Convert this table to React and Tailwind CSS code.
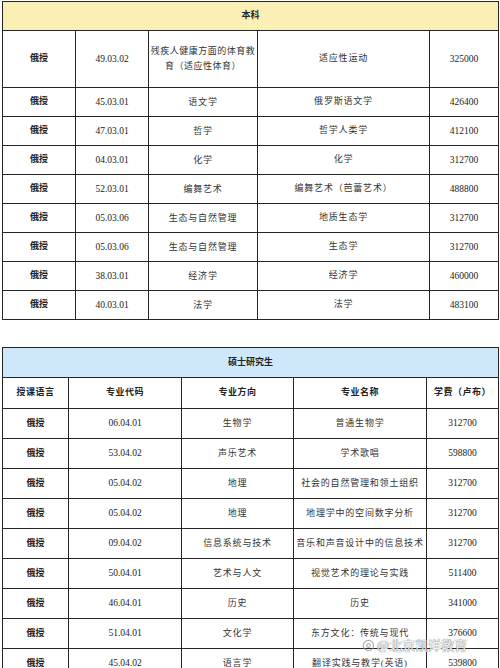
import React from "react";

const BACHELOR = [
  ["49.03.02", "残疾人健康方面的体育教育（适应性体育）", "适应性运动", "325000"],
  ["45.03.01", "语文学", "俄罗斯语文学", "426400"],
  ["47.03.01", "哲学", "哲学人类学", "412100"],
  ["04.03.01", "化学", "化学", "312700"],
  ["52.03.01", "编舞艺术", "编舞艺术（芭蕾艺术）", "488800"],
  ["05.03.06", "生态与自然管理", "地质生态学", "312700"],
  ["05.03.06", "生态与自然管理", "生态学", "312700"],
  ["38.03.01", "经济学", "经济学", "460000"],
  ["40.03.01", "法学", "法学", "483100"],
];

const MASTER = [
  ["06.04.01", "生物学", "普通生物学", "312700"],
  ["53.04.02", "声乐艺术", "学术歌唱", "598800"],
  ["05.04.02", "地理", "社会的自然管理和领土组织", "312700"],
  ["05.04.02", "地理", "地理学中的空间数字分析", "312700"],
  ["09.04.02", "信息系统与技术", "音乐和声音设计中的信息技术", "312700"],
  ["50.04.01", "艺术与人文", "视觉艺术的理论与实践", "511400"],
  ["46.04.01", "历史", "历史", "341000"],
  ["51.04.01", "文化学", "东方文化：传统与现代", "376600"],
  ["45.04.02", "语言学", "翻译实践与教学(英语)", "539800"],
];

const cell = "border border-[#262626] text-center align-middle p-0";
const num = "text-[9.5px] text-[#222]";
const cjk = "text-[9px] tracking-[0.8px] text-[#333]";
const bold = "text-[9px] font-bold text-[#222]";

export default function App() {
  return (
    <div
      className="relative w-[500px] h-[668px] overflow-hidden bg-white px-[2px] pt-[1px]"
      style={{ fontFamily: "'Liberation Serif', 'Noto Sans CJK SC', serif" }}
    >
      {/* 本科 */}
      <table className="w-[496px] table-fixed">
        <colgroup>
          <col className="w-[73px]" />
          <col className="w-[73px]" />
          <col className="w-[109px]" />
          <col className="w-[172px]" />
          <col className="w-[69px]" />
        </colgroup>
        <tbody>
          <tr className="h-[29px] bg-[#fcefb6]">
            <td colSpan={5} className={`${cell} ${bold}`}>本科</td>
          </tr>
          {BACHELOR.map((r, i) => (
            <tr key={i} className={i === 0 ? "h-[57px]" : "h-[29px]"}>
              <td className={`${cell} ${bold}`}>俄授</td>
              <td className={`${cell} ${num}`}>{r[0]}</td>
              <td className={`${cell} text-[9px] text-[#333] ${i === 0 ? "tracking-[0.5px]" : "tracking-[0.8px]"} leading-[15px]`}>{r[1]}</td>
              <td className={`${cell} ${cjk}`}>{r[2]}</td>
              <td className={`${cell} ${num}`}>{r[3]}</td>
            </tr>
          ))}
        </tbody>
      </table>

      {/* 硕士研究生 */}
      <table className="w-[496px] table-fixed mt-[27px]">
        <colgroup>
          <col className="w-[66px]" />
          <col className="w-[113px]" />
          <col className="w-[112px]" />
          <col className="w-[133px]" />
          <col className="w-[72px]" />
        </colgroup>
        <tbody>
          <tr className="h-[30px] bg-[#cfe8f9]">
            <td colSpan={5} className={`${cell} ${bold}`}>硕士研究生</td>
          </tr>
          <tr className="h-[31px]">
            <td className={`${cell} ${bold} tracking-[0.5px]`}>授课语言</td>
            <td className={`${cell} ${bold} tracking-[0.5px]`}>专业代码</td>
            <td className={`${cell} ${bold} tracking-[0.5px]`}>专业方向</td>
            <td className={`${cell} ${bold} tracking-[0.5px]`}>专业名称</td>
            <td className={`${cell} ${bold} tracking-[0.5px]`}>学费（卢布）</td>
          </tr>
          {MASTER.map((r, i) => (
            <tr key={i} className="h-[30px]">
              <td className={`${cell} ${bold}`}>俄授</td>
              <td className={`${cell} ${num}`}>{r[0]}</td>
              <td className={`${cell} ${cjk}`}>{r[1]}</td>
              <td className={`${cell} ${cjk} tracking-[0.6px]`}>{r[2]}</td>
              <td className={`${cell} ${num}`}>{r[3]}</td>
            </tr>
          ))}
        </tbody>
      </table>

      {/* watermark */}
      <div
        className="absolute left-[362px] top-[637px] flex items-center gap-[2px] text-[13px] leading-[16px] text-white/90 [text-shadow:0_0_1px_#777,0_0_1px_#777]"
        style={{ fontFamily: "'Noto Sans CJK SC', sans-serif" }}
      >
        <svg width="13" height="13" viewBox="0 0 14 14" className="opacity-80">
          <circle cx="7" cy="7" r="5.5" fill="none" stroke="#999" strokeWidth="1.2" />
          <circle cx="7" cy="7" r="2" fill="none" stroke="#999" strokeWidth="1.2" />
        </svg>
        <span>@北京凯洋教育</span>
      </div>
    </div>
  );
}
